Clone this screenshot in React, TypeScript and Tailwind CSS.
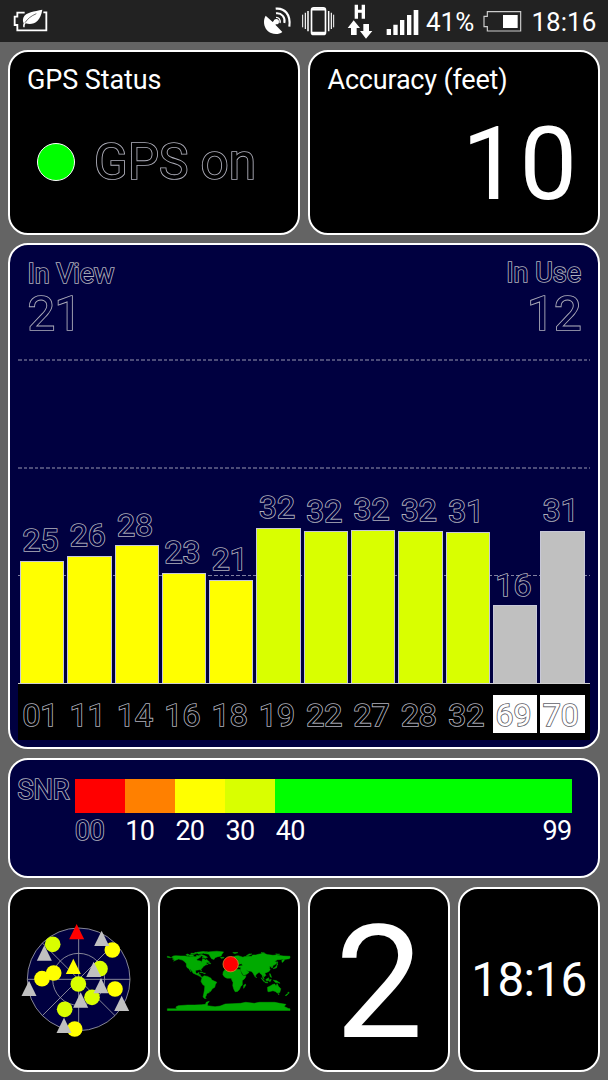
import type { ReactNode } from "react";
import { clsx } from "clsx";

const YELLOW = "#ffff00";
const LIME = "#d9ff00";
const GREY = "#c0c0c0";

const satellites = [
    { id: "01", snr: 25, height: 122.5, color: YELLOW },
    { id: "11", snr: 26, height: 127.5, color: YELLOW },
    { id: "14", snr: 28, height: 138, color: YELLOW },
    { id: "16", snr: 23, height: 110.5, color: YELLOW },
    { id: "18", snr: 21, height: 103.5, color: YELLOW },
    { id: "19", snr: 32, height: 155.5, color: LIME },
    { id: "22", snr: 32, height: 152, color: LIME },
    { id: "27", snr: 32, height: 153.5, color: LIME },
    { id: "28", snr: 32, height: 152.5, color: LIME },
    { id: "32", snr: 31, height: 151.5, color: LIME },
    { id: "69", snr: 16, height: 78, color: GREY, inverted: true },
    { id: "70", snr: 31, height: 152.5, color: GREY, inverted: true },
];

const scale = [
    { label: "10", className: "bg-[#ff8000]" },
    { label: "20", className: "bg-[#ffff00]" },
    { label: "30", className: "bg-[#d9ff00]" },
];

// Sky plot markers, drawn in order
const markers = [
    { type: "dot", x: 128, y: 133, color: LIME },
    { type: "tri", x: 103, y: 160, color: GREY },
    { type: "dot", x: 307, y: 150, color: YELLOW },
    { type: "tri", x: 275, y: 116, color: GREY },
    { type: "tri", x: 200, y: 96, color: "#ff0000" },
    { type: "dot", x: 131, y: 219, color: YELLOW },
    { type: "dot", x: 96, y: 236, color: YELLOW },
    { type: "tri", x: 190, y: 200, color: YELLOW },
    { type: "dot", x: 270, y: 206, color: LIME },
    { type: "tri", x: 251, y: 209, color: GREY },
    { type: "dot", x: 205, y: 252, color: LIME },
    { type: "dot", x: 315, y: 267, color: YELLOW },
    { type: "tri", x: 57, y: 266, color: GREY },
    { type: "dot", x: 246, y: 292, color: LIME },
    { type: "tri", x: 273, y: 258, color: GREY },
    { type: "tri", x: 212, y: 301, color: GREY },
    { type: "tri", x: 335, y: 311, color: GREY },
    { type: "dot", x: 164, y: 328, color: LIME },
    { type: "dot", x: 194, y: 387, color: YELLOW },
    { type: "tri", x: 162, y: 377, color: GREY },
];

// Land outlines as longitude,latitude pairs
const land = [
    "-168,66 -162,70 -156,71 -140,70 -128,70 -115,68 -108,68 -95,68 -94,72 -85,69 -81,68 -87,64 -94,60 -92,57 -82,55 -80,51 -79,55 -77,58 -77,62 -72,61 -68,58 -64,60 -61,56 -56,52 -66,50 -64,46 -60,46 -66,44 -70,43 -70,41 -74,40 -76,36 -81,31 -80,26 -82,28 -84,30 -90,29 -97,28 -97,22 -94,18 -91,19 -90,21 -87,21 -88,16 -83,15 -83,10 -79,9 -77,8 -80,7 -86,11 -92,14 -96,16 -105,20 -106,24 -112,30 -115,31 -110,23 -113,27 -117,33 -121,35 -124,40 -124,47 -130,54 -136,58 -147,61 -152,59 -162,55 -158,58 -165,61 -161,64",
    "-77,8 -72,12 -62,10 -52,5 -50,0 -44,-3 -35,-7 -39,-14 -41,-22 -48,-26 -53,-34 -58,-35 -57,-38 -62,-39 -65,-43 -66,-47 -69,-51 -66,-55 -72,-54 -75,-50 -73,-40 -71,-30 -70,-18 -76,-14 -81,-5 -80,1",
    "-73,78 -60,82 -35,84 -15,82 -20,75 -22,70 -32,68 -40,65 -43,60 -50,62 -54,68 -58,75",
    "-90,76 -78,77 -62,82 -75,83 -92,81",
    "-80,74 -70,71 -62,66 -68,63 -78,66 -74,69 -88,72",
    "-118,73 -105,73 -102,69 -114,69",
    "-125,74 -122,71 -116,73 -120,76",
    "-110,78 -96,77 -100,75 -112,75",
    "-100,80 -90,80 -94,77",
    "-24,66 -14,66 -14,64 -22,63",
    "-10,44 -2,44 0,49 5,53 9,57 12,54 20,55 24,59 30,60 22,61 25,65 18,62 16,57 12,56 10,59 5,60 12,66 20,70 28,71 40,67 42,66 45,68 54,69 68,69 70,73 80,73 87,75 104,78 113,74 130,72 140,73 160,70 180,69 180,65 178,62 163,60 163,56 157,51 156,57 163,62 155,60 143,59 135,54 141,52 140,48 135,44 130,42 129,36 126,35 125,39 121,39 118,38 122,37 119,35 122,31 119,25 110,21 106,20 109,13 105,9 101,13 104,2 100,7 98,15 94,17 90,22 86,20 80,15 78,8 73,17 71,21 66,25 57,26 50,30 56,25 60,22 54,17 44,13 39,21 34,29 36,36 28,37 27,40 36,41 41,42 38,47 31,46 27,42 24,41 23,37 19,42 13,46 18,40 16,38 9,44 3,42 -1,37 -9,37",
    "-6,36 10,37 11,33 20,31 32,31 35,26 38,18 43,11 51,12 48,5 40,-3 40,-15 35,-20 32,-28 26,-34 19,-35 15,-27 12,-17 13,-8 9,0 8,5 -5,5 -12,8 -17,15 -16,23 -10,31",
    "44,-25 50,-16 49,-12 44,-17",
    "114,-22 122,-18 129,-14 136,-12 136,-15 140,-17 142,-11 146,-19 153,-26 150,-37 143,-39 137,-34 130,-32 118,-35 115,-34",
    "-5,50 1,51 -1,55 -3,59 -6,57",
    "-10,52 -6,52 -6,55 -9,54",
    "145,-41 148,-41 147,-44",
    "166,-46 172,-41 174,-42 170,-46",
    "173,-39 175,-36 178,-38 175,-41",
    "131,-1 141,-3 147,-7 151,-10 143,-8 138,-8",
    "95,6 99,3 106,-5 103,-5",
    "106,-6 114,-7 115,-9 107,-8",
    "109,1 114,4 118,6 117,-3 111,-3",
    "120,18 122,18 126,7 122,9",
    "119,0 125,1 122,-5 120,-5",
    "130,33 136,36 140,41 142,40 140,35 132,33",
    "140,42 145,44 142,46",
    "142,54 144,50 142,46",
    "80,9 82,7 80,6",
    "-85,22 -79,23 -74,20 -78,21",
    "-74,20 -68,19 -72,18",
    "-59,51 -53,49 -53,47 -59,48",
    "52,71 57,71 68,76 60,76",
    "12,80 27,80 18,77",
    "95,80 105,79 98,77",
    "138,76 150,75 143,74",
    "-180,69 -172,67 -170,65 -180,66",
    "-180,-85 -152,-85 -155,-80 -148,-76 -120,-74 -100,-74 -80,-73 -68,-72 -66,-66 -57,-63 -62,-70 -62,-76 -40,-79 -25,-77 -10,-71 10,-70 35,-69 50,-66 75,-69 90,-66 115,-66 135,-66 150,-69 168,-72 163,-78 175,-84 180,-85 180,-90 -180,-90",
];

function Panel({ className, children }: { className?: string; children: ReactNode }) {
    return (
        <section className={clsx("rounded-[20px] border-2 border-white", className)}>
            {children}
        </section>
    );
}

// Hollow text: the fill takes the colour behind it, painted over the stroke
function Outline({
    className,
    dark,
    children,
}: {
    className?: string;
    dark?: boolean;
    children: ReactNode;
}) {
    return (
        <span
            className={clsx(
                "block leading-none whitespace-nowrap [paint-order:stroke_fill]",
                dark
                    ? "[-webkit-text-stroke:1.7px_#606068]"
                    : "[-webkit-text-stroke:1.7px_#b0b0bc]",
                className
            )}
        >
            {children}
        </span>
    );
}

function StatusBar() {
    return (
        <header className="flex h-[42px] items-center bg-[#222222] text-[26px] leading-none text-white">
            <svg className="ml-[13px] h-[42px] w-9" viewBox="39 0 108 126" fill="none">
                <path d="M74 38H52v12h-8v25h8v16h87V37h-9" stroke="#fff" strokeWidth="5.5" />
                <path
                    d="M127 29C104 34 77 36 70 53c-3 9 0 14 1 17-2 4-2 8-1 12h4c0-5 0-8 3-12 22 7 44-4 50-41z"
                    fill="#fff"
                />
                <path d="M75 68c8-12 18-20 34-27" stroke="#222" strokeWidth="2" />
            </svg>
            <svg className="ml-[215px] h-[42px] w-7" viewBox="42 0 84 126" fill="none">
                <path d="M47 47c-11 19-3 44 16 52 12 5 25 4 34-3L76 74l6-6-8-7-6 5z" fill="#fff" />
                <circle cx="79" cy="65" r="8" fill="#fff" />
                <path d="M78 40c17-2 29 12 25 29" stroke="#fff" strokeWidth="6" />
                <path d="M77 26c27-3 46 18 41 54" stroke="#fff" strokeWidth="6.5" />
                <path d="M78 52c9 0 14 7 12 17" stroke="#fff" strokeWidth="4" />
            </svg>
            <svg className="ml-[9px] h-[42px] w-[35px]" viewBox="153 0 105 126" fill="none">
                <rect x="184.500" y="23.500" width="42" height="80" rx="7" stroke="#fff" strokeWidth="5" />
                <path d="M186 28h39M186 99h39" stroke="#fff" strokeWidth="7" />
                <path d="M174 33v61M236 33v61" stroke="#fff" strokeWidth="4.500" />
                <path d="M166 38v49M244 38v49" stroke="#fff" strokeWidth="3.500" />
                <path d="M158 44v38M251 44v38" stroke="#fff" strokeWidth="3" />
            </svg>
            <svg className="ml-[11px] h-[42px] w-[26px]" viewBox="291 0 78 126" fill="#fff">
                <path d="M314 14h10v15h11V14h10v42h-10V38h-11v18h-10z" />
                <path d="M311 61l19 23h-10v21h-17V84h-10z" />
                <path d="M340 72h17v21h10l-19 23-18-23h10z" />
            </svg>
            <svg className="ml-[13px] h-[42px] w-[34px]" viewBox="408 0 102 126" fill="#fff">
                <path d="M410 87h13v18h-13zM430 74h13v31h-13zM450 60h13v45h-13zM471 45h13v60h-13zM491 30h14v75h-14z" />
            </svg>
            <span className="ml-[6px] w-14 pt-px">41%</span>
            <svg className="h-[42px] w-10" viewBox="696 0 120 126" fill="none">
                <path d="M712 35h100v58H712V80h-10V49h10z" stroke="#ccc" strokeWidth="3.500" />
                <path d="M759 45h44v39h-44z" fill="#fff" />
            </svg>
            <span className="ml-[9.500px] pt-px">18:16</span>
        </header>
    );
}

function SignalChart() {
    return (
        <Panel className="h-[506px] bg-[#000040] text-[#000040]">
            <div className="flex justify-between pt-[15.500px] pr-[17px] pl-[17.500px]">
                <div>
                    <Outline className="text-[27px] tracking-[-0.100px]">In View</Outline>
                    <Outline className="mt-px text-[49px] tracking-[-0.500px]">21</Outline>
                </div>
                <div className="text-right">
                    <Outline className="-mt-px text-[27px]">In Use</Outline>
                    <Outline className="mt-[2px] text-[49px] tracking-[-0.500px]">12</Outline>
                </div>
            </div>

            <div className="mt-[21.500px] ml-[8px] grid h-[324px] w-[572px]">
                <div className="col-start-1 row-start-1">
                    {[0, 1, 2].map((line) => (
                        <div key={line} className="h-[108px]">
                            <div
                                className={clsx(
                                    line === 2
                                        ? "h-px bg-[repeating-linear-gradient(to_right,#80809f_0_3.5px,transparent_3.5px_5.6px)]"
                                        : "h-[2px] bg-[repeating-linear-gradient(to_right,#4c4c78_0_3.5px,transparent_3.5px_5.6px)]"
                                )}
                            />
                        </div>
                    ))}
                </div>
                <div className="col-start-1 row-start-1 flex items-end gap-[3px] pl-[2px]">
                    {satellites.map((sat) => (
                        <div key={sat.id} className="w-[44.3px]">
                            <Outline className="mb-[4.500px] pl-[2.500px] text-[32px]">{sat.snr}</Outline>
                            <div
                                className="border border-b-0 border-[#c8c8d8]"
                                style={{ height: sat.height, backgroundColor: sat.color }}
                            />
                        </div>
                    ))}
                </div>
            </div>

            <div className="ml-[8px] flex h-[57px] w-[572px] gap-[3px] border-t border-[#d0d0d0] bg-black pt-[10.5px] pl-[2px]">
                {satellites.map((sat) => (
                    <div
                        key={sat.id}
                        className={clsx(
                            "h-[38px] w-[44.3px] pt-[4.500px] pl-[2.500px]",
                            sat.inverted ? "bg-white text-white" : "text-black"
                        )}
                    >
                        <Outline dark={sat.inverted} className="text-[32px]">{sat.id}</Outline>
                    </div>
                ))}
            </div>
        </Panel>
    );
}

function SnrLegend() {
    return (
        <Panel className="mt-[9px] flex h-[120px] bg-[#000040] text-[#000040]">
            <Outline className="w-[64.5px] pt-[16.500px] pl-[7.500px] text-[27px]">SNR</Outline>
            <div className="w-[497px] pt-[19px] text-[27px] leading-none">
                <div className="flex h-[34px]">
                    <div className="w-[50.200px] bg-[#ff0000]" />
                    {scale.map((step) => (
                        <div key={step.label} className={clsx("w-[50.200px]", step.className)} />
                    ))}
                    <div className="flex-1 bg-[#00ff00]" />
                </div>
                <div className="mt-[5px] flex pl-[0.500px] tracking-[-0.700px]">
                    <Outline className="w-[50.200px]">00</Outline>
                    {scale.map((step) => (
                        <span key={step.label} className="w-[50.200px] text-white">{step.label}</span>
                    ))}
                    <span className="text-white">40</span>
                    <span className="ml-auto text-white">99</span>
                </div>
            </div>
        </Panel>
    );
}

function SkyPlot() {
    return (
        <svg className="h-[160px] w-[138px]" viewBox="0 0 414 480">
            <g fill="#000040" stroke="#a0a0a8" strokeWidth="2.500">
                <circle cx="206" cy="238" r="154" />
                <circle cx="206" cy="238" r="78" />
                <path d="M52 238h308M206 84v308M97 129l218 218M315 129L97 347" />
            </g>
            {markers.map((m) =>
                m.type === "dot" ? (
                    <circle key={`${m.x}-${m.y}`} cx={m.x} cy={m.y} r="23.500" fill={m.color} />
                ) : (
                    <path
                        key={`${m.x}-${m.y}`}
                        d={`M${m.x} ${m.y - 24}l22.500 46h-45z`}
                        fill={m.color}
                    />
                )
            )}
        </svg>
    );
}

function WorldMap() {
    return (
        <svg className="h-[100px] w-[138px]" viewBox="0 -1.5 414 300">
            <g
                transform="translate(206 148) scale(1.022 -1.022)"
                fill="#00aa00"
                stroke="#00aa00"
                strokeWidth="1.500"
            >
                {land.map((points) => (
                    <polygon key={points} points={points} />
                ))}
            </g>
            <circle cx="212" cy="101" r="23" fill="#ff0000" stroke="#e08030" strokeWidth="2.500" />
        </svg>
    );
}

export default function App() {
    return (
        <div className="h-[1080px] w-[608px] overflow-hidden bg-[#646464] font-['Roboto',sans-serif]">
            <StatusBar />
            <main className="px-2 pt-2">
                {/* Status and accuracy */}
                <div className="mb-2 grid grid-cols-2 gap-2">
                    <Panel className="h-[185px] bg-black pt-[14.500px]">
                        <h2 className="pl-[17px] text-[27px] leading-none tracking-[-0.100px] text-white">GPS Status</h2>
                        <div className="mt-[44.500px] flex items-center pl-[26.500px]">
                            <div className="-mt-0.5 size-[38.500px] rounded-full border border-white bg-[#00ff00]" />
                            <Outline className="ml-[19px] text-[49.500px] text-black">GPS on</Outline>
                        </div>
                    </Panel>
                    <Panel className="h-[185px] bg-black pt-[14.500px] text-white">
                        <h2 className="pl-[17.500px] text-[27px] leading-none tracking-[-0.200px]">Accuracy (feet)</h2>
                        <p className="mt-[19.500px] pr-[21px] text-right text-[102.500px] leading-none">10</p>
                    </Panel>
                </div>

                <SignalChart />
                <SnrLegend />

                {/* Bottom tiles */}
                <div className="mt-[9px] grid grid-cols-4 gap-2">
                    <Panel className="flex h-[185px] items-center justify-center bg-black">
                        <SkyPlot />
                    </Panel>
                    <Panel className="flex h-[185px] items-center justify-center bg-black">
                        <WorldMap />
                    </Panel>
                    <Panel className="flex h-[185px] items-center justify-center bg-black text-white">
                        <span className="pt-[8px] text-[157px] leading-none">2</span>
                    </Panel>
                    <Panel className="flex h-[185px] items-center justify-center bg-black text-white">
                        <span className="pt-[3px] text-[47.500px] leading-none tracking-[-0.600px]">18:16</span>
                    </Panel>
                </div>
            </main>
        </div>
    );
}
